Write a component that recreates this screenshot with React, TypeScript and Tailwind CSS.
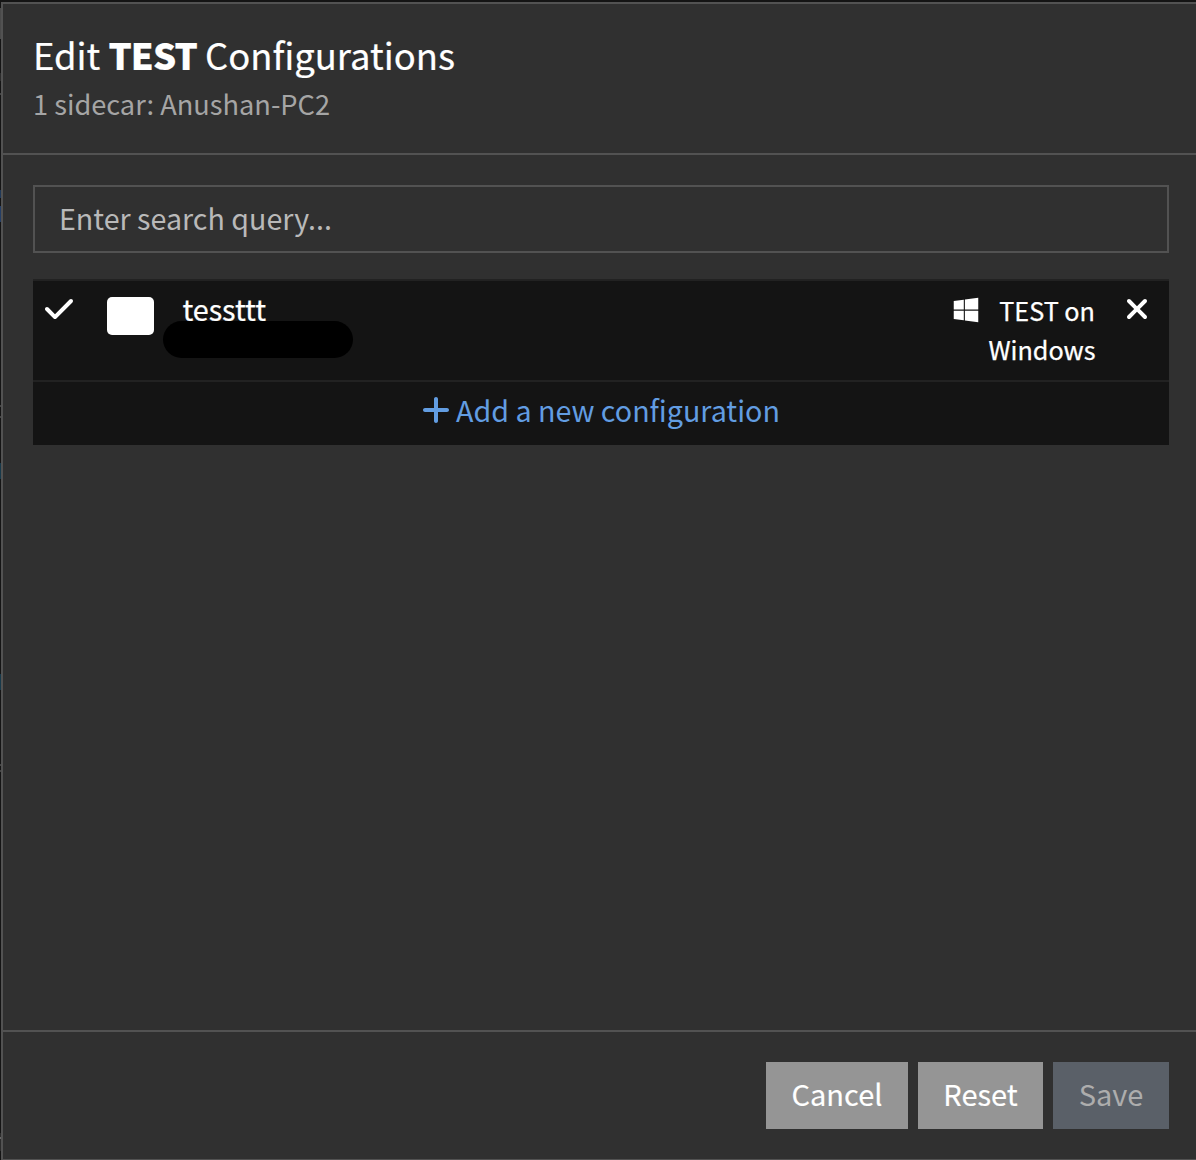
import { FaCheck, FaXmark, FaPlus, FaWindows } from "react-icons/fa6";

/* Sliver of the page that stays visible beside the dialog. */
function Backdrop() {
  return (
    <div className="flex w-px shrink-0 flex-col">
      <span className="mt-1.5 h-[31px] bg-[#4a4a4a]" />
      <span className="mt-[34px] h-[8px] bg-[#2c2c2c]" />
      <span className="mt-[12px] h-[2px] bg-[#444444]" />
      <span className="mt-[95px] h-[8px] bg-[#1f3858]" />
      <span className="mt-[8px] h-[16px] bg-[#243e66]" />
      <span className="mt-[183px] h-[2px] bg-[#444444]" />
      <span className="mt-[9px] h-[2px] bg-[#444444]" />
      <span className="mt-[45px] h-[16px] bg-[#17394a]" />
      <span className="mt-[195px] h-[16px] bg-[#17394a]" />
      <span className="mt-[74px] h-[2px] bg-[#444444]" />
      <span className="mt-[4px] h-[2px] bg-[#444444]" />
      <span className="mt-[361px] h-[4px] bg-[#2c2c2c]" />
      <span className="h-[2px] bg-[#666666]" />
      <span className="h-[12px] bg-[#2c2c2c]" />
    </div>
  );
}

function Header() {
  return (
    <header className="h-[151px] shrink-0 border-b-2 border-[#525252] px-[30px] pt-[29px]">
      <h1 className="text-[36.4px] leading-[42px] text-white [-webkit-text-stroke:0.2px]">
        Edit <strong className="font-black tracking-[-0.025em]">TEST</strong> Configurations
      </h1>
      <p className="mt-[11px] text-[27.2px] leading-[34px] text-[#a5a5a5]">1 sidecar: Anushan-PC2</p>
    </header>
  );
}

function ConfigurationRow() {
  return (
    <li className="flex h-[101px] border-t-2 border-[#222222] text-white [-webkit-text-stroke:0.25px]">
      <span className="ml-[11px] mt-3 w-[63px]">
        <FaCheck className="h-8 w-[30px]" />
      </span>
      <span className="mt-4 h-[38px] w-[47px] rounded-[5px] bg-white" />
      <div className="relative ml-7 flex-1 pt-[11px]">
        <span className="block pl-[0.4px] text-[28.7px] leading-[34px]">tessttt</span>
        <span className="absolute left-[-19px] top-[40px] h-[37px] w-[190px] rounded-full bg-black" />
      </div>
      <div className="mr-[25px] mt-2.5 text-right text-[25.2px] leading-[39px]">
        <div className="flex items-center justify-end">
          <FaWindows className="mb-px mr-5 h-7 w-[26px]" />
          <span className="mr-px">TEST on</span>
        </div>
        <div className="pr-[0.4px]">Windows</div>
      </div>
      <button className="mr-4 mt-3 flex h-8 w-8 items-center justify-center" aria-label="Remove">
        <FaXmark className="h-8 w-8" />
      </button>
    </li>
  );
}

function Footer() {
  return (
    <footer className="flex h-[129px] shrink-0 items-start justify-end gap-2.5 border-t-2 border-[#525252] pr-[27px] pt-[30px] text-[29px] leading-[63px] text-white">
      <button className="h-[67px] w-[142px] bg-[#959595] pb-1 [-webkit-text-stroke:0.15px]">Cancel</button>
      <button className="h-[67px] w-[125px] bg-[#959595] pb-1 [-webkit-text-stroke:0.15px]">Reset</button>
      <button className="h-[67px] w-[116px] bg-[#5a6068] pb-1 text-[#adadad]">Save</button>
    </footer>
  );
}

export default function App() {
  return (
    <div className="flex h-[1160px] w-[1196px] overflow-hidden bg-[#141414] pt-0.5 font-['Noto_Sans_CJK_SC',sans-serif]">
      <Backdrop />
      <div className="flex h-[1158px] flex-1 flex-col border-b border-l-2 border-t-2 border-[#525252] bg-[#303030]">
        <Header />
        <main className="flex-1 pl-[30px] pr-[27px] pt-[30px]">
          <input
            className="block h-[68px] w-full border-2 border-[#525252] bg-transparent px-6 pb-1 text-[28.65px] placeholder:text-[#b9b9b9]"
            placeholder="Enter search query..."
          />
          <ul className="mt-[26px] bg-[#141414]">
            <ConfigurationRow />
            <li className="flex h-[65px] justify-center border-t-2 border-[#222222] pr-0.5 pt-[9px] text-[28.65px] leading-[38px] text-[#629de2]">
              <FaPlus className="mr-1 mt-[3px] h-[32px] w-[32px]" />
              Add a new configuration
            </li>
          </ul>
        </main>
        <Footer />
      </div>
    </div>
  );
}
